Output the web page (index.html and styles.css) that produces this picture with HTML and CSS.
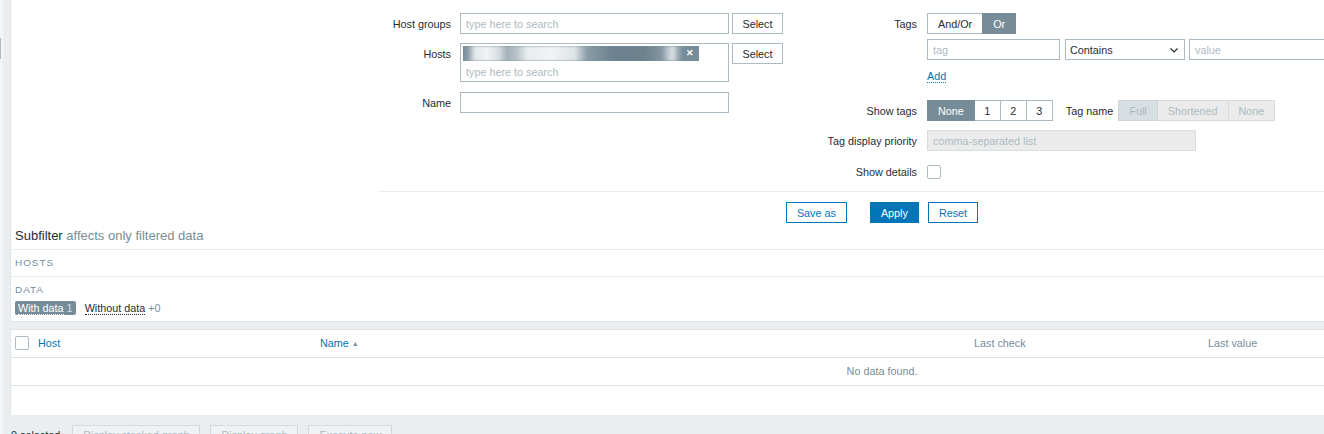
FILE: index.html
```html
<!DOCTYPE html>
<html>
<head>
<meta charset="utf-8">
<title>Latest data</title>
<link rel="stylesheet" href="styles.css">
</head>
<body>
<div class="layout">
  <div class="rail"><div class="rail-thumb"></div></div>
  <div class="gutter"></div>
  <main class="main">
    <section class="filter">
      <div class="filter-body">
        <div class="col col-left">
          <div class="row row-gap9">
            <label class="lbl">Host groups</label>
            <div class="field field-inline">
              <div class="input w269"><span class="ph">type here to search</span></div>
              <button class="btn-alt">Select</button>
            </div>
          </div>
          <div class="row row-gap10">
            <label class="lbl">Hosts</label>
            <div class="field field-inline">
              <div class="ms">
                <div class="chip"><span class="chip-blur"></span><span class="chip-x">✕</span></div>
                <div class="ms-ph">type here to search</div>
              </div>
              <button class="btn-alt">Select</button>
            </div>
          </div>
          <div class="row">
            <label class="lbl">Name</label>
            <div class="field"><div class="input w269"></div></div>
          </div>
        </div>
        <div class="col col-right">
          <div class="row row-tags">
            <label class="lbl">Tags</label>
            <div class="field">
              <div class="seg">
                <span class="seg-btn">And/Or</span><span class="seg-btn on">Or</span>
              </div>
              <div class="cond">
                <div class="input w133"><span class="ph">tag</span></div>
                <div class="select">
                  <span>Contains</span>
                  <svg class="chev" width="8" height="5" viewBox="0 0 8 5"><polyline points="0.5,0.5 4,4 7.5,0.5" fill="none" stroke="#1f2c33" stroke-width="1.2"/></svg>
                </div>
                <div class="input w150"><span class="ph">value</span></div>
              </div>
              <div class="add-line"><a class="link-add">Add</a></div>
            </div>
          </div>
          <div class="row row-gap9">
            <label class="lbl">Show tags</label>
            <div class="field field-inline">
              <div class="seg">
                <span class="seg-btn on">None</span><span class="seg-btn num">1</span><span class="seg-btn num">2</span><span class="seg-btn num">3</span>
              </div>
              <span class="sublbl">Tag name</span>
              <div class="seg seg-dis">
                <span class="seg-btn on">Full</span><span class="seg-btn">Shortened</span><span class="seg-btn">None</span>
              </div>
            </div>
          </div>
          <div class="row row-gap10">
            <label class="lbl">Tag display priority</label>
            <div class="field"><div class="input input-dis w269"><span class="ph">comma-separated list</span></div></div>
          </div>
          <div class="row">
            <label class="lbl">Show details</label>
            <div class="field field-check"><span class="checkbox"></span></div>
          </div>
        </div>
      </div>
      <div class="filter-actions">
        <button class="btn-out btn-save">Save as</button>
        <button class="btn-main">Apply</button>
        <button class="btn-out">Reset</button>
      </div>
      <div class="subfilter-title">Subfilter <span class="muted">affects only filtered data</span></div>
      <div class="sf-section sf-hosts"><div class="sf-head">Hosts</div></div>
      <div class="sf-section sf-data">
        <div class="sf-head sf-head-data">Data</div>
        <div class="sf-items">
          <span class="sf-chip"><span class="dotted">With data</span> <span class="cnt">1</span></span>
          <span class="sf-item"><span class="dotted dark">Without data</span> <span class="cnt-muted">+0</span></span>
        </div>
      </div>
    </section>

    <section class="table-panel">
      <table class="list">
        <colgroup>
          <col class="c-check"><col class="c-host"><col class="c-name"><col class="c-check2"><col class="c-value"><col class="c-rest">
        </colgroup>
        <thead>
          <tr>
            <th class="th-check"><span class="checkbox"></span></th>
            <th><a class="th-link">Host</a></th>
            <th><a class="th-link">Name</a> <span class="arrow">▲</span></th>
            <th>Last check</th>
            <th>Last value</th>
            <th></th>
          </tr>
        </thead>
        <tbody>
          <tr><td colspan="6" class="nodata">No data found.</td></tr>
        </tbody>
      </table>
      <div class="table-spacer"></div>
    </section>

    <div class="footer">
      <span class="selected">0 selected</span>
      <button class="btn-dis">Display stacked graph</button>
      <button class="btn-dis">Display graph</button>
      <button class="btn-dis">Execute now</button>
    </div>
  </main>
</div>
</body>
</html>
```

FILE: styles.css
```css
* { box-sizing: border-box; }
html, body { margin: 0; padding: 0; }
body {
  background: #ebeef0;
  font-family: "Liberation Sans", Arial, sans-serif;
  font-size: 10.8px;
  color: #1f2c33;
  width: 1324px;
  height: 434px;
  overflow: hidden;
}
button { font-family: inherit; font-size: inherit; cursor: default; }

.layout { display: flex; align-items: flex-start; }
.rail { width: 3px; height: 434px; flex: none; background: #f4f5f6; padding-top: 38px; }
.rail-thumb { width: 1px; height: 21px; background: #a9b9c1; }
.gutter { width: 7px; flex: none; }
.main { width: 1743px; flex: none; }

/* filter panel */
.filter {
  background: #fff;
  border-left: 1px solid #dfe4e7;
  border-bottom: 1px solid #dfe4e7;
}
.filter-body {
  margin-left: 367px;
  padding: 13px 0 9px;
  display: flex;
  align-items: flex-start;
  border-bottom: 1px solid #ebeef0;
}
.col-left { width: 412px; flex: none; }
.col-right { flex: 1; }
.row { display: flex; align-items: flex-start; }
.row-gap9 { margin-bottom: 9px; }
.row-gap10 { margin-bottom: 10px; }
.row-tags { margin-bottom: 14px; }
.lbl { flex: none; text-align: right; height: 21px; line-height: 20px; padding-top: 1px; white-space: nowrap; }
.col-left .lbl { width: 73px; margin-right: 9px; }
.col-right .lbl { width: 127px; margin-right: 10px; }
.field-inline { display: flex; align-items: flex-start; }

.input {
  height: 21px;
  border: 1px solid #acbbc2;
  background: #fff;
  padding: 1px 5px 0;
  line-height: 18px;
  white-space: nowrap;
  overflow: hidden;
}
.w269 { width: 269px; }
.w133 { width: 133px; }
.w150 { width: 150px; }
.ph { color: #acbbc2; }
.input-dis { background: #ebebeb; border-color: #d6dde0; }

.btn-alt {
  margin-left: 3px;
  width: 51px;
  height: 21px;
  padding: 1px 0 0;
  border: 1px solid #acbbc2;
  background: #fff;
  color: #1f2c33;
  line-height: 18px;
}

/* multiselect */
.ms {
  width: 269px;
  height: 39px;
  border: 1px solid #acbbc2;
  padding: 2px 0 0 2px;
}
.chip {
  display: flex;
  align-items: center;
  justify-content: flex-end;
  width: 236px;
  height: 15px;
  background: #768d99;
  padding-right: 5px;
  overflow: hidden;
}
.chip-blur {
  flex: none;
  width: 220px;
  height: 15px;
  margin-right: 3px;
  background: linear-gradient(to right,
    #768d99 0px, #8d9ea8 5px, #e3e8ea 12px, #f1f3f4 24px, #d6dde0 36px,
    #a3b1b8 44px, #b8c4ca 54px, #e9edee 64px, #f1f3f4 90px, #dde3e6 112px,
    #8a9da7 124px, #6c8290 150px, #6b818e 180px, #8194a0 198px, #c5cfd3 206px,
    #d7dee1 210px, #93a4ad 216px, #768d99 220px);
  filter: blur(1.2px);
}
.chip-x { color: #fff; font-size: 9px; font-weight: bold; line-height: 15px; }
.ms-ph { color: #acbbc2; line-height: 16px; margin-top: 3px; padding-left: 3px; }

/* segmented radio */
.seg { display: inline-flex; }
.seg-btn {
  height: 21px;
  line-height: 18px;
  padding: 1px 10px 0;
  border: 1px solid #acbbc2;
  background: #fff;
  color: #1f2c33;
  white-space: nowrap;
  margin-left: -1px;
}
.seg-btn.num { padding: 1px 9.5px 0; }
.seg-btn:first-child { margin-left: 0; }
.seg-btn.on { background: #768d99; border-color: #768d99; color: #fff; position: relative; }
.seg-dis .seg-btn { background: #ebebeb; border-color: #d6dde0; color: #acbbc2; }
.seg-dis .seg-btn.on { background: #d8dfe2; border-color: #ccd5d9; color: #acbbc2; }
.sublbl { margin: 0 5px 0 13px; height: 21px; line-height: 20px; padding-top: 1px; white-space: nowrap; }

.cond { display: flex; margin-top: 5px; }
.select {
  width: 120px;
  height: 21px;
  margin: 0 4px 0 5px;
  border: 1px solid #acbbc2;
  padding: 1px 4px 0 4px;
  display: flex;
  align-items: center;
  justify-content: space-between;
}
.chev { margin-right: 2px; }
.add-line { margin-top: 6px; height: 20px; line-height: 20px; }
.link-add { color: #0275b8; border-bottom: 1px dotted #0275b8; }

.field-check { height: 21px; display: flex; align-items: center; }
.checkbox {
  display: inline-block;
  width: 14px;
  height: 14px;
  border: 1px solid #acbbc2;
  border-radius: 2px;
  background: #fff;
}

/* actions */
.filter-actions { display: flex; justify-content: center; padding-top: 10px; }
.btn-out, .btn-main {
  height: 21px;
  padding: 1px 10px 0;
  line-height: 18px;
  border: 1px solid #0275b8;
  background: #fff;
  color: #0275b8;
}
.btn-save { margin-right: 23px; }
.btn-main { background: #0275b8; color: #fff; margin-right: 9px; }

/* subfilter */
.subfilter-title {
  padding: 0 4px;
  line-height: 26px;
  font-size: 13px;
  border-bottom: 1px solid #ebeef0;
}
.muted { color: #768d99; }
.sf-section { padding: 0 4px; }
.sf-hosts { height: 27px; border-bottom: 1px solid #ebeef0; }
.sf-head {
  font-size: 9.9px;
  letter-spacing: 1px;
  text-transform: uppercase;
  color: #768d99;
  line-height: 26px;
}
.sf-data { padding-top: 5px; padding-bottom: 6px; }
.sf-head-data { line-height: 16px; }
.sf-items { display: flex; align-items: center; margin-top: 3px; height: 14px; }
.sf-chip {
  background: #768d99;
  color: #fff;
  padding: 0 3px;
  line-height: 14px;
  border-radius: 2px;
  margin-right: 9px;
}
.dotted { border-bottom: 1px dotted #fff; }
.dotted.dark { border-bottom-color: #1f2c33; }
.cnt { color: #d5dde1; }
.cnt-muted { color: #768d99; }

/* table */
.table-panel {
  margin-top: 7px;
  background: #fff;
  border-left: 1px solid #dfe4e7;
  border-top: 1px solid #dfe4e7;
}
.list { width: 1742px; border-collapse: collapse; table-layout: fixed; }
.c-check { width: 22px; }
.c-host { width: 282px; }
.c-name { width: 654px; }
.c-check2 { width: 234px; }
.c-value { width: 250px; }
.c-rest { width: 300px; }
.list th {
  height: 27px;
  padding: 0 5px;
  text-align: left;
  font-weight: normal;
  color: #768d99;
  border-bottom: 1px solid #dfe4e7;
  white-space: nowrap;
}
.list th.th-check { padding: 2px 0 0 4px; }
.th-link { color: #0275b8; }
.arrow { color: #768d99; font-size: 7px; vertical-align: 1px; }
.nodata {
  height: 28px;
  text-align: center;
  color: #768d99;
  border-bottom: 1px solid #dfe4e7;
}
.table-spacer { height: 29px; }

/* footer */
.footer { display: flex; align-items: center; padding: 10px 0 0 1px; }
.selected { margin-right: 12px; line-height: 21px; color: #1f2c33; }
.btn-dis {
  height: 21px;
  padding: 0 10px;
  margin-right: 10px;
  border: 1px solid #d3dbdf;
  background: #f0f1f2;
  color: #acbbc2;
  line-height: 19px;
  white-space: nowrap;
}
```
